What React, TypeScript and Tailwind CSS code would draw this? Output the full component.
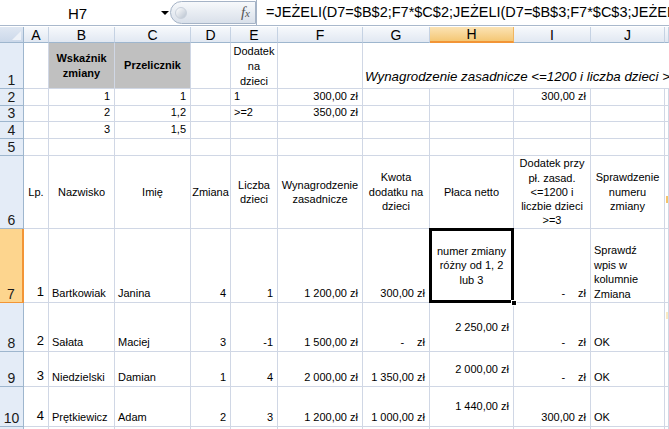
import React from "react";
import clsx from "clsx";

const FONT = { fontFamily: '"Liberation Sans", Arial, sans-serif' };

type CellProps = {
  children?: React.ReactNode;
  className?: string;
  align?: "num" | "mid" | "txt" | "center";
};

// one worksheet cell with the light gridlines on right and bottom
function Cell({ children, className, align = "txt" }: CellProps) {
  return (
    <div
      className={clsx(
        "border-r border-b border-[#d0d7e5] flex overflow-hidden text-[11px] text-black",
        align === "num" && "justify-end items-end whitespace-nowrap pr-[4px] pl-[2px] pb-[1px]",
        align === "mid" && "justify-end items-center whitespace-nowrap pr-[4px] pl-[2px]",
        align === "txt" && "justify-start items-end whitespace-nowrap pl-[3px] pb-[1px]",
        align === "center" && "justify-center items-center text-center",
        className,
      )}
    >
      {children}
    </div>
  );
}

function RowHead({ n, active }: { n?: number; active?: boolean }) {
  return (
    <div
      className={clsx(
        "border-b flex items-end justify-center text-[14px] leading-none pb-[1px] text-[#1a1a1a]",
        active
          ? "bg-[#fdd58e] border-r-2 border-r-[#f29536] border-b-[#f29536]"
          : "bg-[#e4ecf7] border-r border-[#9eb6ce]",
      )}
    >
      {n}
    </div>
  );
}

function ColHead({ l, active }: { l: string; active?: boolean }) {
  return (
    <div
      className={clsx(
        "flex items-center justify-center text-[14px] leading-none border-r",
        active
          ? "bg-gradient-to-b from-[#fbe3b4] to-[#f4c774] border-r-[#f0b560] border-b-2 border-b-[#f29536]"
          : "bg-gradient-to-b from-[#f7f9fc] to-[#e1e8f2] border-[#c5d2e3] border-b border-b-[#9eb6ce]",
      )}
    >
      {l}
    </div>
  );
}

// accounting style zero: dash then zl at the right edge
function Dash() {
  return (
    <>
      <span>-</span>
      <span className="ml-[13px]">zł</span>
    </>
  );
}

export default function App() {
  const letters = ["A", "B", "C", "D", "E", "F", "G", "H", "I", "J", ""];

  return (
    <div className="w-[669px] h-[429px] overflow-hidden bg-white" style={FONT}>
      {/* Formula bar */}
      <div className="h-[26px] flex items-stretch border-b border-[#a9b8cc] bg-white">
        <div className="w-[170px] flex items-center">
          <div className="w-[155px] text-center text-[15px] leading-none pt-[1px]">H7</div>
          <div className="w-0 h-0 border-l-[4px] border-r-[4px] border-t-[4px] border-l-transparent border-r-transparent border-t-black ml-[6px]" />
        </div>
        <div className="w-[86px] my-[1px] rounded-l-full border border-[#a5b3c6] bg-gradient-to-b from-[#f7f9fb] to-[#d9e0ea] flex items-center pl-[4px] pr-[5px] justify-between">
          <div className="w-[12px] h-[12px] rounded-full bg-gradient-to-br from-white to-[#b9c3d0] border border-[#c9d1dc]" />
          <span className="italic text-[15px] text-[#555] leading-none" style={{ fontFamily: '"Liberation Serif", serif' }}>
            f<span className="text-[11px]">x</span>
          </span>
        </div>
        <div className="flex-1 flex items-center pl-[9px] text-[14.5px] whitespace-nowrap overflow-hidden border-l border-[#a5b3c6]">
          =JEŻELI(D7=$B$2;F7*$C$2;JEŻELI(D7=$B$3;F7*$C$3;JEŻELI(D7=$B$4;F7*$C$4;"numer zmiany")))
        </div>
      </div>

      {/* Sheet */}
      <div className="mt-[1px] grid grid-cols-[24px_25px_66px_76px_40px_47px_85px_67px_84px_77px_74px_1fr] grid-rows-[16px_46px_17px_16px_17px_17px_73px_74px_49px_35px_40px_20px]">
        {/* header row */}
        <div className="bg-gradient-to-b from-[#dfe7f2] to-[#cbd8ea] border-r border-b border-[#9eb6ce] relative">
          <div className="absolute right-[2px] bottom-[2px] w-0 h-0" style={{ borderRight: "9px solid #eef2f8", borderTop: "9px solid transparent" }} />
        </div>
        {letters.map((l) => (
          <ColHead key={l || "k"} l={l} active={l === "H"} />
        ))}

        {/* row 1 */}
        <RowHead n={1} />
        <Cell />
        <Cell align="center" className="bg-[#c0c0c0] font-bold leading-[15px]">
          Wskaźnik
          <br />
          zmiany
        </Cell>
        <Cell align="center" className="bg-[#c0c0c0] font-bold">
          Przelicznik
        </Cell>
        <Cell />
        <Cell align="center" className="leading-[15px] !items-start pt-[1px]">
          Dodatek
          <br />
          na
          <br />
          dzieci
        </Cell>
        <Cell />
        <div className="col-span-5 border-b border-[#d0d7e5] flex items-end pl-[2px] pb-[1px] italic text-[13.3px] whitespace-nowrap overflow-hidden">
          Wynagrodzenie zasadnicze &lt;=1200 i liczba dzieci &gt; 2
        </div>

        {/* row 2 */}
        <RowHead n={2} />
        <Cell />
        <Cell align="num">1</Cell>
        <Cell align="num">1</Cell>
        <Cell />
        <Cell>1</Cell>
        <Cell align="num">300,00 zł</Cell>
        <Cell />
        <Cell />
        <Cell align="num">300,00 zł</Cell>
        <Cell />
        <Cell />

        {/* row 3 */}
        <RowHead n={3} />
        <Cell />
        <Cell align="num">2</Cell>
        <Cell align="num">1,2</Cell>
        <Cell />
        <Cell>&gt;=2</Cell>
        <Cell align="num">350,00 zł</Cell>
        <Cell />
        <Cell />
        <Cell />
        <Cell />
        <Cell />

        {/* row 4 */}
        <RowHead n={4} />
        <Cell />
        <Cell align="num">3</Cell>
        <Cell align="num">1,5</Cell>
        {Array.from({ length: 8 }).map((_, i) => (
          <Cell key={i} />
        ))}

        {/* row 5 */}
        <RowHead n={5} />
        {Array.from({ length: 11 }).map((_, i) => (
          <Cell key={i} />
        ))}

        {/* row 6 - table header */}
        <RowHead n={6} />
        <Cell align="center">Lp.</Cell>
        <Cell align="center">Nazwisko</Cell>
        <Cell align="center">Imię</Cell>
        <Cell align="center">Zmiana</Cell>
        <Cell align="center" className="leading-[14.5px]">
          Liczba
          <br />
          dzieci
        </Cell>
        <Cell align="center" className="leading-[14.5px]">
          Wynagrodzenie
          <br />
          zasadnicze
        </Cell>
        <Cell align="center" className="leading-[14.5px]">
          Kwota
          <br />
          dodatku na
          <br />
          dzieci
        </Cell>
        <Cell align="center">Płaca netto</Cell>
        <Cell align="center" className="leading-[14.3px]">
          Dodatek przy
          <br />
          pł. zasad.
          <br />
          &lt;=1200 i
          <br />
          liczbie dzieci
          <br />
          &gt;=3
        </Cell>
        <Cell align="center" className="leading-[14.5px]">
          Sprawdzenie
          <br />
          numeru
          <br />
          zmiany
        </Cell>
        <Cell className="relative">
          <span className="absolute left-[1px] top-[40px] w-[2px] h-[7px] bg-[#f6c46a]" />
        </Cell>

        {/* row 7 */}
        <RowHead n={7} active />
        <Cell align="num" className="text-[13px] pr-[3px]">1</Cell>
        <Cell>Bartkowiak</Cell>
        <Cell>Janina</Cell>
        <Cell align="num">4</Cell>
        <Cell align="num">1</Cell>
        <Cell align="num">1 200,00 zł</Cell>
        <Cell align="num">300,00 zł</Cell>
        <div className="relative border-r border-b border-[#d0d7e5] flex items-center justify-center text-center text-[11px] leading-[14.5px]">
          <div className="absolute -left-[1px] -top-[1px] -right-[1px] -bottom-[1px] border-[3px] border-black" />
          <div className="absolute -right-[4px] -bottom-[4px] w-[6px] h-[6px] bg-black border border-white" />
          numer zmiany
          <br />
          różny od 1, 2
          <br />
          lub 3
        </div>
        <Cell align="num">
          <Dash />
        </Cell>
        <Cell className="leading-[14.5px] whitespace-normal">
          <div>
            Sprawdź
            <br />
            wpis w
            <br />
            kolumnie
            <br />
            Zmiana
          </div>
        </Cell>
        <Cell />

        {/* row 8 */}
        <RowHead n={8} />
        <Cell align="num" className="text-[13px] pr-[3px]">2</Cell>
        <Cell>Sałata</Cell>
        <Cell>Maciej</Cell>
        <Cell align="num">3</Cell>
        <Cell align="num">-1</Cell>
        <Cell align="num">1 500,00 zł</Cell>
        <Cell align="num">
          <Dash />
        </Cell>
        <Cell align="mid">2 250,00 zł</Cell>
        <Cell align="num">
          <Dash />
        </Cell>
        <Cell>OK</Cell>
        <Cell className="relative">
          <span className="absolute left-[1px] top-[9px] w-[2px] h-[7px] bg-[#faeac2]" />
        </Cell>

        {/* row 9 */}
        <RowHead n={9} />
        <Cell align="num" className="text-[13px] pr-[3px]">3</Cell>
        <Cell>Niedzielski</Cell>
        <Cell>Damian</Cell>
        <Cell align="num">1</Cell>
        <Cell align="num">4</Cell>
        <Cell align="num">2 000,00 zł</Cell>
        <Cell align="num">1 350,00 zł</Cell>
        <Cell align="mid">2 000,00 zł</Cell>
        <Cell align="num">
          <Dash />
        </Cell>
        <Cell>OK</Cell>
        <Cell />

        {/* row 10 */}
        <RowHead n={10} />
        <Cell align="num" className="text-[13px] pr-[3px]">4</Cell>
        <Cell>Prętkiewicz</Cell>
        <Cell>Adam</Cell>
        <Cell align="num">2</Cell>
        <Cell align="num">3</Cell>
        <Cell align="num">1 200,00 zł</Cell>
        <Cell align="num">1 000,00 zł</Cell>
        <Cell align="mid">1 440,00 zł</Cell>
        <Cell align="num">300,00 zł</Cell>
        <Cell>OK</Cell>
        <Cell />

        {/* row 11, only its top edge is visible */}
        <RowHead />
        {Array.from({ length: 11 }).map((_, i) => (
          <Cell key={i} />
        ))}
      </div>
    </div>
  );
}
